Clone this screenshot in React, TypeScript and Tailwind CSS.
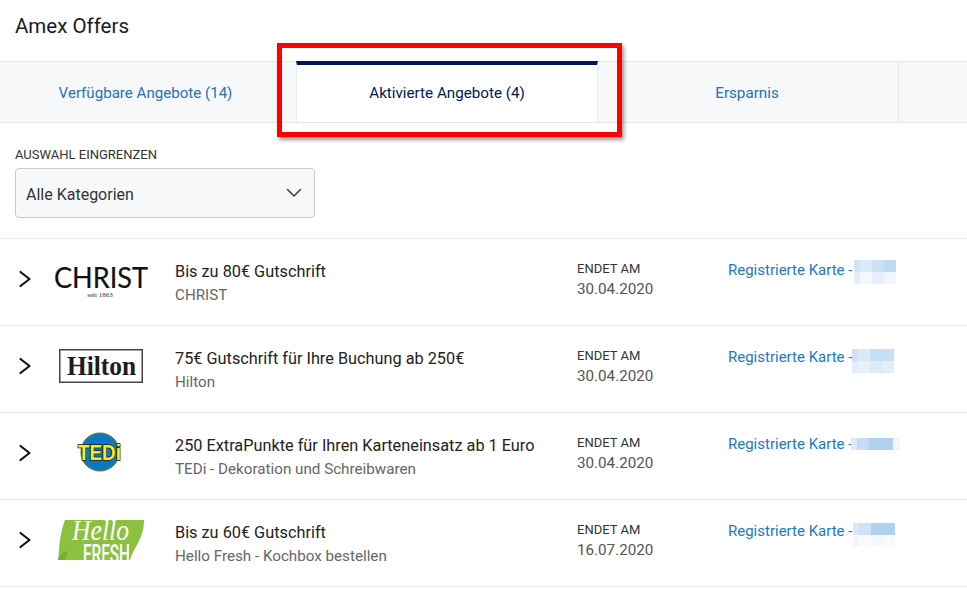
const offers = [
  {
    title: "Bis zu 80€ Gutschrift",
    sub: "CHRIST",
    date: "30.04.2020",
    logo: "christ",
    blurPos: "ml-[2px]",
    blur: [
      [["w-[6px]", "bg-[#cfe2f6]"], ["w-[12px]", "bg-[#dbe9f8]"], ["w-[12px]", "bg-[#cbe0f5]"], ["w-[12px]", "bg-[#bfd9f3]"]],
      [["w-[6px]", "bg-[#e4eefa]"], ["w-[12px]", "bg-[#f3f8fd]"], ["w-[12px]", "bg-[#e6f0fb]"], ["w-[12px]", "bg-[#f1f6fd]"]],
    ],
  },
  {
    title: "75€ Gutschrift für Ihre Buchung ab 250€",
    sub: "Hilton",
    date: "30.04.2020",
    logo: "hilton",
    blurPos: "mt-[2px]",
    blur: [
      [["w-[6px]", "bg-[#cfe2f6]"], ["w-[12px]", "bg-[#dbe9f8]"], ["w-[12px]", "bg-[#c8dff5]"], ["w-[12px]", "bg-[#c8dff5]"]],
      [["w-[6px]", "bg-[#e4eefa]"], ["w-[12px]", "bg-[#e8f1fb]"], ["w-[12px]", "bg-[#dbe9f8]"], ["w-[12px]", "bg-[#e4eefa]"]],
    ],
  },
  {
    title: "250 ExtraPunkte für Ihren Karteneinsatz ab 1 Euro",
    sub: "TEDi - Dekoration und Schreibwaren",
    date: "30.04.2020",
    logo: "tedi",
    blurPos: "-ml-[1px] mt-[4px]",
    blur: [
      [["w-[6px]", "bg-[#dce9f8]"], ["w-[12px]", "bg-[#c5dcf4]"], ["w-[24px]", "bg-[#b1d1f0]"], ["w-[7px]", "bg-[#f1f6fd]"]],
    ],
  },
  {
    title: "Bis zu 60€ Gutschrift",
    sub: "Hello Fresh - Kochbox bestellen",
    date: "16.07.2020",
    logo: "hello",
    blurPos: "ml-[1px] mt-[2px]",
    blur: [
      [["w-[6px]", "bg-[#dce9f8]"], ["w-[12px]", "bg-[#d0e3f6]"], ["w-[24px]", "bg-[#b1d1f0]"]],
      [["w-[6px]", "bg-[#f1f6fd]"], ["w-[12px]", "bg-[#f8fbfe]"], ["w-[12px]", "bg-[#f4f8fd]"], ["w-[12px]", "bg-[#f8fbfe]"]],
    ],
  },
];

function Logo({ name }: { name: string }) {
  if (name === "christ") {
    return (
      <svg width="100" height="60" viewBox="0 0 100 60">
        <text x="4" y="39" fontFamily="Lato, sans-serif" fontSize="29" stroke="#111" strokeWidth="0.2" fill="#111" textLength="94" lengthAdjust="spacingAndGlyphs">
          CHRIST
        </text>
        <text x="50" y="48" textAnchor="middle" fontFamily="Liberation Serif, serif" fontSize="7" fill="#333">
          seit 1863
        </text>
      </svg>
    );
  }
  if (name === "hilton") {
    return (
      <svg width="100" height="60" viewBox="0 0 100 60">
        <rect x="9.75" y="13.75" width="82.5" height="32.5" fill="#fff" stroke="#444" strokeWidth="1.5" />
        <text x="17" y="39" fontFamily="Liberation Serif, serif" fontWeight="700" fontSize="28" fill="#1c1c1c" textLength="69" lengthAdjust="spacingAndGlyphs">
          Hilton
        </text>
      </svg>
    );
  }
  if (name === "tedi") {
    return (
      <svg width="100" height="60" viewBox="0 0 100 60">
        <circle cx="50" cy="29" r="19" fill="#0b78bf" stroke="#6b7a3c" strokeWidth="1.2" />
        <text x="28" y="37" fontFamily="Liberation Sans, sans-serif" fontWeight="700" fontSize="22" fill="#ffe81a" stroke="#1a1a1a" strokeWidth="1.6" paintOrder="stroke" textLength="43" lengthAdjust="spacingAndGlyphs">
          TEDi
        </text>
      </svg>
    );
  }
  return (
    <svg width="100" height="60" viewBox="0 0 100 60">
      <defs>
        <clipPath id="hello-clip">
          <rect x="0" y="10" width="100" height="40" />
        </clipPath>
      </defs>
      <g clipPath="url(#hello-clip)">
        <path d="M15 10 H94 C94 22 90 30 83 42 L80 50 H8 C9 44 9 36 10 30 C11 22 13 15 15 10 Z" fill="#8cc13f" />
        <path d="M8 50 C10 44 13 42 18 41 L15 50 Z" fill="#78ad34" />
        <text x="22" y="30" fontFamily="Liberation Serif, serif" fontStyle="italic" fontSize="30" fill="#fff" textLength="57" lengthAdjust="spacingAndGlyphs">
          Hello
        </text>
        <text x="33" y="53" fontFamily="Roboto, sans-serif" fontWeight="500" fontSize="26" fill="#fff" textLength="47" lengthAdjust="spacingAndGlyphs">
          FRESH
        </text>
      </g>
    </svg>
  );
}

function Chevron() {
  return (
    <svg width="14" height="18" viewBox="0 0 14 18" fill="none" stroke="#111" strokeWidth="2.2" strokeLinecap="round" strokeLinejoin="round">
      <path d="M2.5 2 L11.5 9 L2.5 16" />
    </svg>
  );
}

export default function App() {
  return (
    <div className="relative w-[967px] h-[599px] overflow-hidden bg-white font-['Roboto',sans-serif]">
      <div className="h-[61px] pl-[15px] pt-[13px] text-[20.5px] leading-[26px] text-[#1a1a1a]">Amex Offers</div>

      <div className="flex h-[62px] bg-[#f7f8f9] border-y border-[#e6e6e6] text-[15.2px]">
        <div className="w-[296px] flex items-center justify-center text-[#2671b9] pr-[5px] pt-[2px] text-[15.1px]">Verfügbare Angebote (14)</div>
        <div className="w-[302px] bg-white border-x border-[#ececec] border-t-[4px] border-t-[#00175a] -mt-px flex items-center justify-center text-[#00175a]">
          Aktivierte Angebote (4)
        </div>
        <div className="w-[301px] border-r border-[#e6e6e6] flex items-center justify-center text-[#2671b9] pt-[2px] pr-[2px]">Ersparnis</div>
      </div>

      <div className="pl-[15px] pt-[25px] h-[116px] border-b border-[#e9e9e9]">
        <div className="text-[13px] leading-[14px] text-[#333]">AUSWAHL EINGRENZEN</div>
        <div className="mt-[6px] w-[300px] h-[50px] flex items-center justify-between pl-[10px] pr-[12px] bg-[#f7f8f9] border border-[#c8c8c8] rounded-[4px] text-[16px] text-[#333]">
          <span className="pt-[4px]">Alle Kategorien</span>
          <svg width="16" height="10" viewBox="0 0 16 10" fill="none" stroke="#444" strokeWidth="1.6" strokeLinecap="round" strokeLinejoin="round">
            <path d="M1.5 1.5 L8 8 L14.5 1.5" />
          </svg>
        </div>
      </div>

      {offers.map((o) => (
        <div key={o.logo} className="flex h-[87px] border-b border-[#e9e9e9] items-start">
          <div className="w-[50px] h-full flex items-center pl-[18px] pb-[6px]">
            <Chevron />
          </div>
          <div className="w-[100px] pt-[10px]">
            <Logo name={o.logo} />
          </div>
          <div className="w-[402px] ml-[25px] pt-[22px]">
            <div className="text-[16.3px] leading-[22px] text-[#222]">{o.title}</div>
            <div className="mt-[2px] text-[15.2px] leading-[20px] text-[#666]">{o.sub}</div>
          </div>
          <div className="w-[151px] pt-[21px]">
            <div className="text-[13px] leading-[18px] text-[#333]">ENDET AM</div>
            <div className="mt-[1px] text-[15.2px] leading-[20px] text-[#555]">{o.date}</div>
          </div>
          <div className="flex items-start pt-[21px] text-[15px] leading-[20px] text-[#2178c9]">
            <span>Registrierte Karte -</span>
            <div className={o.blurPos}>
              {o.blur.map((r, i) => (
                <div key={i} className="flex">
                  {r.map((c, j) => (
                    <div key={j} className={`h-[12px] ${c[0]} ${c[1]}`} />
                  ))}
                </div>
              ))}
            </div>
          </div>
        </div>
      ))}

      <div className="absolute left-[277px] top-[43px] w-[345px] h-[94px] border-[5px] border-[#fe0000] shadow-[2px_3px_4px_rgba(0,0,0,0.4)]" />
    </div>
  );
}
